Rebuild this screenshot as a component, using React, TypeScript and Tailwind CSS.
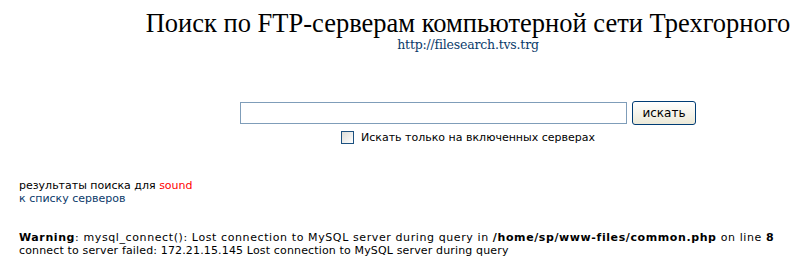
import React, { useState } from "react";

const App = () => {
  const [query, setQuery] = useState<string>("");
  const [onlyEnabled, setOnlyEnabled] = useState<boolean>(false);

  return (
    <div className="min-h-[260px] w-[809px] bg-white text-black">
      <div className="pl-[127px] pt-[9px] text-center">
        <h1 className="font-['Liberation_Serif',serif] text-[26.5px] leading-[28px] font-normal whitespace-nowrap">
          Поиск по FTP-серверам компьютерной сети Трехгорного
        </h1>
        <a
          href="#"
          className="block font-['DejaVu_Serif',serif] text-[12.5px] leading-[15px] tracking-[-0.2px] text-[#0a3a6a]"
        >
          http://filesearch.tvs.trg
        </a>

        <div className="mt-[49px] flex items-center justify-center gap-[5px]">
          <input
            type="text"
            value={query}
            onChange={(e) => setQuery(e.target.value)}
            className="h-[22px] w-[387px] border border-[#7f9db9] bg-white px-1 text-[13px] outline-none"
          />
          <button className="h-[24px] w-[64px] rounded-[3px] border border-[#003c74] bg-gradient-to-b from-white to-[#ece9d8] font-['DejaVu_Sans',sans-serif] text-[12px] leading-none text-black">
            искать
          </button>
        </div>

        <label className="mt-[6px] flex items-center justify-center gap-[7px] font-['DejaVu_Sans',sans-serif] text-[11px] leading-[13px]">
          <span
            onClick={() => setOnlyEnabled(!onlyEnabled)}
            className="flex h-[13px] w-[13px] items-center justify-center border border-[#1c5180] bg-gradient-to-br from-[#dcdcd7] to-white text-[9px] text-[#21a121]"
          >
            {onlyEnabled ? "✓" : ""}
          </span>
          <span>Искать только на включенных серверах</span>
        </label>
      </div>

      <div className="mt-[35px] pl-[19px] font-['DejaVu_Sans',sans-serif] text-[11px] leading-[13px]">
        <div>
          результаты поиска для <span className="text-[#ff0000]">sound</span>
        </div>
        <a href="#" className="text-[#0a3a6a]">
          к списку серверов
        </a>
      </div>

      <div className="mt-[26px] pl-[19px] font-['DejaVu_Sans',sans-serif] text-[11px] leading-[13px]">
        <div className="tracking-[0.6px] whitespace-nowrap">
          <b>Warning</b>: mysql_connect(): Lost connection to MySQL server during query in{" "}
          <b>/home/sp/www-files/common.php</b> on line <b>8</b>
        </div>
        <div className="tracking-[0.15px]">
          connect to server failed: 172.21.15.145 Lost connection to MySQL server during query
        </div>
      </div>
    </div>
  );
};

export default App;
